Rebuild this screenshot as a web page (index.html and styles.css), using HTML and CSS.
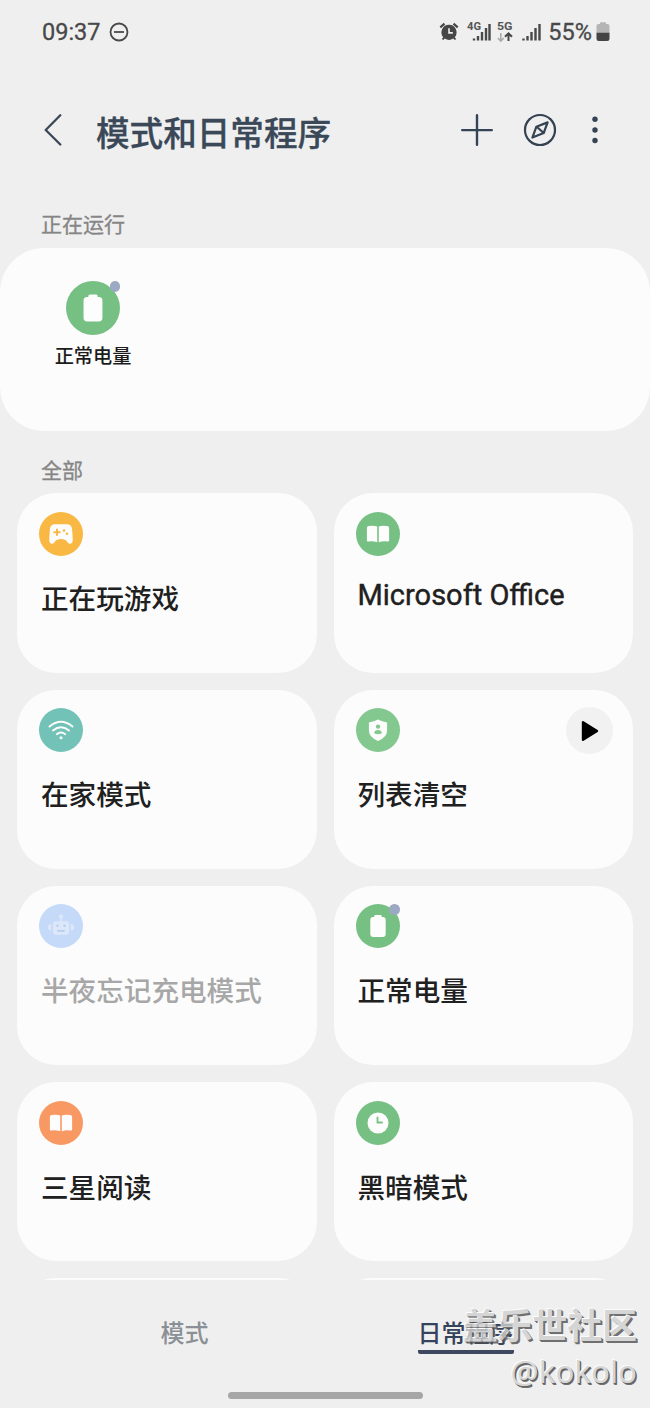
FILE: index.html
```html
<!DOCTYPE html>
<html lang="zh-CN">
<head>
<meta charset="utf-8">
<title>模式和日常程序</title>
<link rel="stylesheet" href="styles.css">
</head>
<body>
<svg class="defs" width="0" height="0">
  <symbol id="battery" viewBox="0 0 44 44"><path fill="#fdfdfd" d="M18.200 13v-.6q0-1.300 1.300-1.300h5q1.300 0 1.300 1.300v.6h.9q3 0 3 3v14q0 3-3 3h-9.400q-3 0-3-3V16q0-3 3-3z"/></symbol>
  <symbol id="book" viewBox="0 0 44 44"><path fill="#fdfdfd" d="M13 14q4.500-.9 8.200.4v15.900q-4-1.600-9-.8-1.300.2-1.300-1.100V15.800q0-1.600 2.100-1.800zM31 14q-4.500-.9-8.200.4v15.900q4-1.600 9-.8 1.300.2 1.300-1.100V15.800q0-1.600-2.100-1.800z"/></symbol>
</svg>
<div class="screen">
  <header class="status">
    <span class="clock">09:37</span>
    <svg class="dnd" width="20" height="20" viewBox="0 0 20 20"><g fill="none" stroke="#494949" stroke-width="1.800"><circle cx="10" cy="10" r="8.500"/><path d="M5 10h10"/></g></svg>
    <div class="indicators">
      <svg width="20" height="20" viewBox="0 0 20 20"><path fill="#464646" fill-rule="evenodd" d="M10 2.800a7.600 7.600 0 0 1 5.800 12.500l1.400 1.800-1.500 1-1.400-1.500a7.600 7.600 0 0 1-8.600 0l-1.400 1.500-1.500-1 1.400-1.800A7.600 7.600 0 0 1 10 2.800zM9.200 6.200v5.500h4.600v-1.600h-3V6.200z"/><path d="M1.300 5.300l4.200-3.600M18.700 5.300l-4.200-3.600" stroke="#464646" stroke-width="2.200" fill="none"/></svg>
      <svg class="cell4" width="25" height="24" viewBox="0 0 25 24"><text class="net" x="0" y="10" textLength="14" lengthAdjust="spacingAndGlyphs">4G</text><path d="M7 20.500v-2M11 20.500v-4.500M15 20.500V12M19 20.500V8M22.500 20.500V4" stroke="#494949" stroke-width="2.400"/></svg>
      <svg class="cell5" width="17" height="24" viewBox="0 0 17 24"><text class="net" x="0" y="10" textLength="15.500" lengthAdjust="spacingAndGlyphs">5G</text><path d="M3.800 13v8M.8 18l3 3 3-3" fill="none" stroke="#aaa" stroke-width="1.600"/><path d="M11.500 21v-7.500M8 16.800l3.500-3.500 3.500 3.500" fill="none" stroke="#464646" stroke-width="2"/></svg>
      <svg class="cell0" width="19" height="24" viewBox="0 0 19 24"><path d="M1.500 20.500v-2M5.500 20.500v-4.500M9.500 20.500V12M13.500 20.500V8M17.500 20.500V4" stroke="#494949" stroke-width="2.400"/></svg>
      <span class="percent">55%</span>
      <svg class="level" width="14" height="20" viewBox="0 0 14 20"><path fill="#b5b5b5" d="M4 2V1q0-.8.8-.8h4.400q.8 0 .8.800v1h1.500q2 0 2 2v7H.5V4q0-2 2-2z"/><path fill="#444" d="M.5 10.700h13v6q0 2.300-2.300 2.300H2.800Q.5 19 .5 16.700z"/></svg>
    </div>
  </header>

  <div class="appbar">
    <svg class="back" width="20" height="32" viewBox="0 0 20 32"><path d="M17.300 1.300L2.700 16l14.600 14.500" fill="none" stroke="#3a4756" stroke-width="2.300" stroke-linecap="round" stroke-linejoin="round"/></svg>
    <h1>模式和日常程序</h1>
    <div class="actions">
      <svg width="32" height="32" viewBox="0 0 32 32"><path d="M16 1.300v29.400M1.200 16.100h29.600" stroke="#344456" stroke-width="2.400" stroke-linecap="round"/></svg>
      <svg width="34" height="34" viewBox="0 0 34 34"><g fill="none" stroke="#344252" stroke-width="2.200" stroke-linejoin="round"><circle cx="17" cy="17" r="15"/><path d="M24.600 9.400l-3.900 10.600-11.300 4.600 4-10.900zM13.700 13.700l7 6.300"/></g></svg>
      <svg width="6" height="28" viewBox="0 0 6 28"><g fill="#344252"><circle cx="3" cy="3.300" r="2.700"/><circle cx="3" cy="14" r="2.700"/><circle cx="3" cy="24.500" r="2.700"/></g></svg>
    </div>
  </div>

  <h2 class="label running-label">正在运行</h2>
  <section class="running">
    <div class="running-item">
      <div class="icon large green"><svg viewBox="0 0 44 44"><use href="#battery"/></svg><i class="dot"></i></div>
      <span>正常电量</span>
    </div>
  </section>

  <h2 class="label all-label">全部</h2>
  <main class="grid">
    <article class="card">
      <div class="icon yellow"><svg viewBox="0 0 44 44"><path fill="#fdfdfd" d="M16 12.300h12q4.600 0 5.100 5l.7 10.300q0 4.200-3 4.200-1.500 0-2.700-2.100Q26.600 27 22 27t-6.100 2.700q-1.200 2.100-2.700 2.100-3 0-3-4.200l.7-10.300q.5-5 5.100-5z"/><path d="M18 16.800v7M14.500 20.300h7" stroke="#f9b844" stroke-width="2"/><circle cx="25" cy="18.500" r="1.300" fill="#f9b844"/><circle cx="28" cy="21.800" r="1.300" fill="#f9b844"/></svg></div>
      <h3>正在玩游戏</h3>
    </article>
    <article class="card">
      <div class="icon green"><svg viewBox="0 0 44 44"><use href="#book"/></svg></div>
      <h3 class="latin">Microsoft Office</h3>
    </article>
    <article class="card">
      <div class="icon teal"><svg viewBox="0 0 44 44"><g fill="none" stroke="#fdfdfd" stroke-width="1.900" stroke-linecap="round"><path d="M10.500 18.600q11.500-9.600 23 0M14 22.400q8-6.500 16 0M17.800 26.200q4.200-3.400 8.400 0"/></g><circle cx="22" cy="29.800" r="1.500" fill="#fdfdfd"/></svg></div>
      <h3>在家模式</h3>
    </article>
    <article class="card">
      <div class="icon mint"><svg viewBox="0 0 44 44"><path fill="#fdfdfd" d="M22 11.500q4 2.400 8.400 2.700.7 0 .7.800v7.200q0 7-9.100 10.700-9.100-3.700-9.100-10.700V15q0-.8.700-.8 4.400-.3 8.400-2.700z"/><circle cx="22" cy="18.600" r="2.200" fill="#83c88e"/><path fill="#83c88e" d="M18.200 25.100q.2-3.200 3.800-3.200t3.800 3.200q-.2 1.100-3.800 1.100t-3.800-1.100z"/></svg></div>
      <button class="play" aria-label="运行"><svg width="18" height="22" viewBox="0 0 18 22"><path d="M2 2.200v17.600L16 11z" stroke="#000" stroke-width="2.400" stroke-linejoin="round"/></svg></button>
      <h3>列表清空</h3>
    </article>
    <article class="card disabled">
      <div class="icon blue"><svg viewBox="0 0 44 44"><g fill="#dce8fa"><circle cx="22" cy="12.500" r="2.100"/><path d="M21.200 14h1.600v4h-1.600z"/><rect x="14" y="17.300" width="16" height="13.500" rx="3"/><path d="M12.300 19.800v7q-3.500-.8-3.500-3.500t3.500-3.500zM31.700 19.800v7q3.500-.8 3.500-3.500t-3.500-3.500z"/></g><g fill="#b7cced"><circle cx="18.500" cy="21.800" r="1.200"/><circle cx="25.500" cy="21.800" r="1.200"/><rect x="18" y="26" width="8" height="1.700" rx=".8"/></g></svg></div>
      <h3>半夜忘记充电模式</h3>
    </article>
    <article class="card">
      <div class="icon green"><svg viewBox="0 0 44 44"><use href="#battery"/></svg><i class="dot"></i></div>
      <h3>正常电量</h3>
    </article>
    <article class="card">
      <div class="icon orange"><svg viewBox="0 0 44 44"><use href="#book"/></svg></div>
      <h3>三星阅读</h3>
    </article>
    <article class="card">
      <div class="icon green"><svg viewBox="0 0 44 44"><circle cx="22" cy="22" r="10.500" fill="#fdfdfd"/><path d="M21.500 16.500v5h4.500" fill="none" stroke="#76c083" stroke-width="1.800" stroke-linecap="round"/></svg></div>
      <h3>黑暗模式</h3>
    </article>
    <article class="card"></article>
    <article class="card"></article>
  </main>

  <footer>
    <nav>
      <span class="tab"><b>模式</b></span>
      <span class="tab active"><b>日常程序</b></span>
    </nav>
    <div class="handle"></div>
  </footer>
  <div class="watermark"><p class="site">盖乐世社区</p><p class="user">@kokolo</p></div>
</div>
</body>
</html>
```
FILE: styles.css
```css
* { box-sizing: border-box; }
body, h1, h2, h3, p { margin: 0; }
body { background: #efefef; font-family: Roboto, "Noto Sans CJK SC", sans-serif; }
svg { display: block; flex: none; }
.defs { position: absolute; }
.screen { position: relative; width: 650px; height: 1408px; overflow: hidden; display: flex; flex-direction: column; }

.status { height: 64px; display: flex; align-items: center; padding: 0 40px 0 42px; color: #484848; font-size: 23.5px; -webkit-text-stroke: .3px #484848; flex: none; }
.dnd { margin-left: 8px; }
.indicators { display: flex; align-items: center; margin-left: auto; }
.net { font: 700 11px Roboto, sans-serif; fill: #555; -webkit-text-stroke: 0; }
.cell4 { margin-left: 8px; }
.cell5 { margin-left: 5px; }
.cell0 { margin-left: 8px; }
.percent { margin-left: 7px; }
.level { margin-left: 4px; }

.appbar { height: 132px; flex: none; display: flex; align-items: center; padding: 0 52px 0 43px; color: #3a4858; }
h1 { margin-left: 33px; padding-top: 10px; font-size: 33.6px; line-height: 48px; font-weight: 500; white-space: nowrap; -webkit-text-stroke: .3px #3a4858; }
.actions { margin-left: auto; display: flex; align-items: center; }
.actions svg + svg { margin-left: 30px; }
.actions svg:last-child { margin-left: 35px; }

.label { padding-left: 41px; font-size: 21px; line-height: 32px; font-weight: 400; color: #858585; -webkit-text-stroke: .3px #858585; flex: none; }
.running-label { margin-top: 13px; height: 38.5px; }
.running { height: 183px; flex: none; border-radius: 44px; background: #fcfcfc; padding: 33.5px 0 0 43px; }
.running-item { width: 100px; display: flex; flex-direction: column; align-items: center; color: #1c1c1c; font-size: 19.2px; line-height: 28px; font-weight: 500; }
.running-item span { margin-top: 8px; }
.all-label { margin-top: 24.5px; height: 38.4px; }

.icon { position: relative; width: 44px; height: 44px; border-radius: 50%; flex: none; }
.icon svg { width: 100%; height: 100%; }
.icon.large { width: 54px; height: 54px; }
.green { background: #76c083; }
.mint { background: #83c88e; }
.yellow { background: #f9b844; }
.teal { background: #72c2b7; }
.blue { background: #c5d9f8; }
.orange { background: #f89963; }
.dot { position: absolute; right: 0; top: 0; width: 10.5px; height: 10.5px; border-radius: 50%; background: #9ba9c3; }

.grid { flex: none; height: 787px; overflow: hidden; padding: 0 17px; display: grid; grid-template-columns: 299.5px 299.5px; grid-auto-rows: 179.4px; gap: 16.8px 17px; }
.card { position: relative; border-radius: 39px; background: #fcfcfc; padding: 18.7px 22px 0; color: #202020; }
.card h3 { margin: 24px 0 0 2px; font-size: 27.6px; line-height: 40px; font-weight: 500; white-space: nowrap; }
.card h3.latin { margin-top: 19.3px; font-weight: 400; font-size: 29px; -webkit-text-stroke: .4px #202020; }
.card.disabled h3 { color: #a7a7a7; }
.play { position: absolute; right: 20px; top: 17.5px; width: 47px; height: 47px; padding: 0; border: 0; border-radius: 50%; background: #f1f1f1; display: grid; place-items: center; }

footer { flex: 1; display: flex; flex-direction: column; align-items: center; }
nav { width: 100%; padding: 34px 44px 0; display: grid; grid-template-columns: 1fr 1fr; justify-items: center; }
.tab { height: 40px; font-size: 24px; line-height: 40px; color: #8a9096; }
.tab b { font-weight: 500; }
.tab.active { color: #35445a; border-bottom: 4px solid #3c495f; border-radius: 2px; }
.handle { width: 195px; height: 7px; margin-top: 38px; border-radius: 4px; background: #a6a6a6; }

.watermark { position: absolute; right: 13px; bottom: 14px; text-align: right; color: #d0d0d0; white-space: nowrap; opacity: .82; }
.site { font-size: 34.8px; line-height: 42px; font-weight: 700; text-shadow: -1px -1px 0 #fff, 1px 1px 0 #555, 2px 2px 0 #555; }
.user { font-family: "Noto Sans", sans-serif; font-size: 31.3px; line-height: 46px; text-shadow: -1px -1px 0 #fff, 1px 1px 0 #444, 1.5px 1.5px 0 #555; }
```
